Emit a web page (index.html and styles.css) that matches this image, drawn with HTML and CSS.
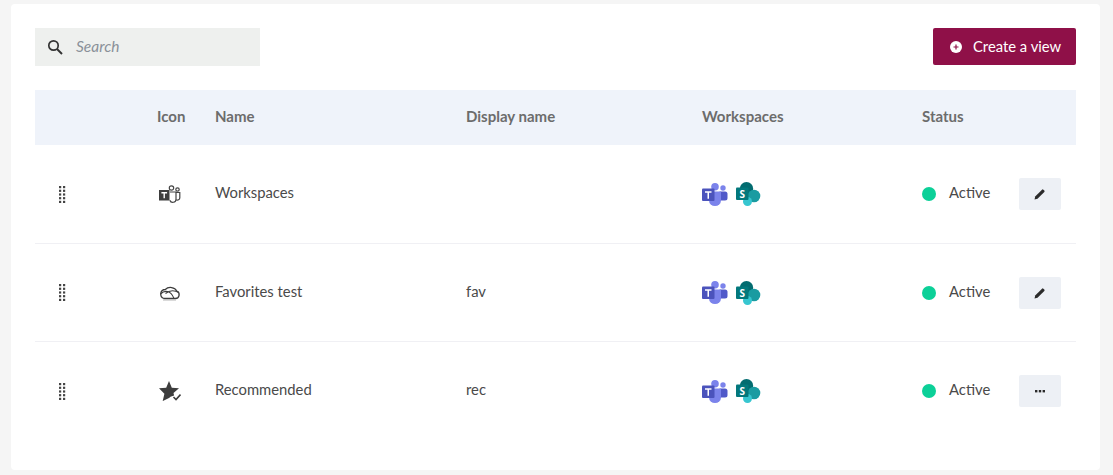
FILE: index.html
```html
<!DOCTYPE html>
<html lang="en">
<head>
<meta charset="utf-8">
<title>Views</title>
<link rel="stylesheet" href="styles.css">
</head>
<body>
<svg class="defs" width="0" height="0" aria-hidden="true">
  <defs>
    <symbol id="handle" viewBox="0 0 7 19">
      <g fill="#444">
        <rect x="0" y="1" width="2.200" height="2.200"/><rect x="4" y="1" width="2.200" height="2.200"/>
        <rect x="0" y="4.700" width="2.200" height="2.200"/><rect x="4" y="4.700" width="2.200" height="2.200"/>
        <rect x="0" y="8.400" width="2.200" height="2.200"/><rect x="4" y="8.400" width="2.200" height="2.200"/>
        <rect x="0" y="12.100" width="2.200" height="2.200"/><rect x="4" y="12.100" width="2.200" height="2.200"/>
        <rect x="0" y="15.800" width="2.200" height="2.200"/><rect x="4" y="15.800" width="2.200" height="2.200"/>
      </g>
    </symbol>
    <symbol id="teams" viewBox="0 0 26 23">
      <circle cx="21" cy="5" r="2.700" fill="#7b83eb"/>
      <rect x="16" y="8.500" width="9.500" height="9" rx="2.500" fill="#5059c9"/>
      <circle cx="13" cy="3.800" r="3.800" fill="#7b83eb"/>
      <path d="M7 8.500h12v9a6 5.500 0 0 1-12 0z" fill="#7b83eb"/>
      <rect x="0" y="5.500" width="12.500" height="12.500" rx="1" fill="#4b53bc"/>
      <path d="M3 8.300h6.500v1.500H7v6H5.500v-6H3z" fill="#fff"/>
    </symbol>
    <symbol id="sharepoint" viewBox="0 0 26 24">
      <circle cx="10.500" cy="6.700" r="6.700" fill="#036c70"/>
      <circle cx="18" cy="14" r="6.300" fill="#1a9ba1"/>
      <circle cx="11.500" cy="19.500" r="4.500" fill="#37c6d0"/>
      <rect x="0" y="5.500" width="12.500" height="12.500" rx="1" fill="#03787c"/>
      <text x="6.200" y="15.800" class="sp-letter">S</text>
    </symbol>
  </defs>
</svg>
<main class="card">
  <div class="toolbar">
    <div class="search">
      <svg class="search-icon" viewBox="0 0 16 16" width="16" height="16"><circle cx="6.500" cy="6.500" r="4.700" fill="none" stroke="#333" stroke-width="1.700"/><path d="M10 10l5 5" stroke="#333" stroke-width="2" fill="none"/></svg>
      <span class="search-text">Search</span>
    </div>
    <button class="create">
      <svg viewBox="0 0 12 12" width="12" height="12"><circle cx="6" cy="6" r="6" fill="#fff"/><path d="M3.500 6h5M6 3.500v5" stroke="#8f1048" stroke-width="1.200"/></svg>
      <span class="label">Create a view</span>
    </button>
  </div>

  <div class="row head">
    <div></div>
    <div>Icon</div>
    <div>Name</div>
    <div>Display name</div>
    <div>Workspaces</div>
    <div>Status</div>
    <div></div>
  </div>

  <div class="row item first">
    <div class="handle"><svg width="7" height="19"><use href="#handle"/></svg></div>
    <div class="glyph">
      <svg viewBox="0 0 22 18" width="22" height="18"><rect x="0" y="5" width="10.500" height="10.500" fill="#3d3d3d"/><path d="M2.400 7.700h5.700M5.200 7.700v5.500" stroke="#fff" stroke-width="1.400"/><circle cx="12.500" cy="3" r="2.200" fill="none" stroke="#444" stroke-width="1.200"/><circle cx="18.500" cy="4.500" r="1.700" fill="none" stroke="#444" stroke-width="1.200"/><path d="M11 7h6v7a3.200 3.200 0 0 1-6.200 1.200M17 7.500h3.800v5a2.500 2.500 0 0 1-3.800 2.300" fill="none" stroke="#444" stroke-width="1.200"/></svg>
    </div>
    <div class="txt">Workspaces</div>
    <div></div>
    <div class="apps">
      <svg width="26" height="23"><use href="#teams"/></svg>
      <svg width="26" height="24"><use href="#sharepoint"/></svg>
    </div>
    <div class="status"><i class="dot"></i><span class="txt">Active</span></div>
    <button class="action">
      <svg viewBox="0 0 12 12" width="12" height="12"><path d="M0.500 11.500l.7-3L8 1.700a1 1 0 0 1 1.400 0l.9.9a1 1 0 0 1 0 1.400L3.500 10.800z" fill="#2b2b2b"/></svg>
    </button>
  </div>

  <div class="row item">
    <div class="handle"><svg width="7" height="19"><use href="#handle"/></svg></div>
    <div class="glyph">
      <svg viewBox="0 0 22 16" width="22" height="16"><path d="M5 13.500h11.500a3.800 3.800 0 0 0 1.300-7.300A6.800 5.800 0 0 0 6.300 4.500 4.600 4.600 0 0 0 5 13.500z" fill="none" stroke="#3d3d3d" stroke-width="1.300"/><path d="M1.500 9c4-4 10-4 13.500 4.500M6.500 8.500c3.500-3 8-3.800 13.500-1" fill="none" stroke="#3d3d3d" stroke-width="1.100"/><path d="M4 15h13" stroke="#b5b5b5" stroke-width="1"/></svg>
    </div>
    <div class="txt">Favorites test</div>
    <div class="txt">fav</div>
    <div class="apps">
      <svg width="26" height="23"><use href="#teams"/></svg>
      <svg width="26" height="24"><use href="#sharepoint"/></svg>
    </div>
    <div class="status"><i class="dot"></i><span class="txt">Active</span></div>
    <button class="action">
      <svg viewBox="0 0 12 12" width="12" height="12"><path d="M0.500 11.500l.7-3L8 1.700a1 1 0 0 1 1.400 0l.9.9a1 1 0 0 1 0 1.400L3.500 10.800z" fill="#2b2b2b"/></svg>
    </button>
  </div>

  <div class="row item last">
    <div class="handle"><svg width="7" height="19"><use href="#handle"/></svg></div>
    <div class="glyph">
      <svg viewBox="0 0 22 20" width="22" height="20"><path d="M10 0l2.800 6.700 7.200.6-5.500 4.700 .6 2.500-3.600 1.300-1.500 1.200-6.300 3.100 1.700-7.300L0 7.300l7.200-.6z" fill="#3d3d3d"/><path d="M14.500 16l2.500 2.500 4.500-5" fill="none" stroke="#3d3d3d" stroke-width="1.600"/></svg>
    </div>
    <div class="txt">Recommended</div>
    <div class="txt">rec</div>
    <div class="apps">
      <svg width="26" height="23"><use href="#teams"/></svg>
      <svg width="26" height="24"><use href="#sharepoint"/></svg>
    </div>
    <div class="status"><i class="dot"></i><span class="txt">Active</span></div>
    <button class="action">
      <svg viewBox="0 0 10 3" width="10" height="3"><g fill="#2b2b2b"><rect x="0" y="0" width="2.400" height="2.400"/><rect x="3.800" y="0" width="2.400" height="2.400"/><rect x="7.600" y="0" width="2.400" height="2.400"/></g></svg>
    </button>
  </div>
</main>
</body>
</html>
```

FILE: styles.css
```css
* { box-sizing: border-box; }

html, body { height: 100%; }

body {
  margin: 0;
  padding: 4px 13px 5px 11px;
  background: #f5f5f5;
  font-family: "Lato", "Noto Sans", sans-serif;
  font-size: 14.800px;
  color: #4a4a4a;
  overflow: hidden;
}

.defs { display: block; height: 0; }

.sp-letter {
  font-family: "Noto Sans", sans-serif;
  font-size: 10px;
  font-weight: 700;
  fill: #fff;
  text-anchor: middle;
}

.card {
  height: 466px;
  padding: 24px 24px 0;
  background: #fff;
  border-radius: 4px;
}

.toolbar {
  display: flex;
  justify-content: space-between;
  align-items: flex-start;
  margin-bottom: 24px;
}

.search {
  display: flex;
  align-items: center;
  gap: 13px;
  width: 225px;
  height: 38px;
  padding-left: 12px;
  background: #eef0ee;
}

.search-text {
  margin-bottom: 2px;
  font-size: 15.500px;
  font-style: italic;
  color: #8a9099;
}

.create {
  display: flex;
  align-items: center;
  gap: 11px;
  width: 143px;
  height: 37px;
  padding: 0 0 0 17px;
  border: 0;
  border-radius: 2px;
  background: #8f1048;
  color: #fff;
  font: inherit;
}

.label { margin-bottom: 2px; }

.row {
  display: grid;
  grid-template-columns: 122px 58px 251px 236px 220px 97px 42px 15px;
  align-items: center;
}

.head {
  height: 55px;
  padding-bottom: 4px;
  background: #eff3fa;
  font-size: 15px;
  font-weight: 700;
  color: #6c6c6c;
}

.item {
  height: 98px;
  border-bottom: 1px solid #f0f0f4;
}

.item.first { height: 99px; }

.item.last { border-bottom: 0; }

.txt { margin-bottom: 4px; }

.handle {
  display: flex;
  padding-left: 24px;
}

.glyph {
  display: flex;
  align-items: center;
  padding-left: 2px;
}

.apps {
  display: flex;
  align-items: center;
  gap: 8px;
}

.status {
  display: flex;
  align-items: center;
  gap: 13px;
}

.dot {
  width: 14px;
  height: 14px;
  border-radius: 50%;
  background: #0cd098;
}

.action {
  display: flex;
  align-items: center;
  justify-content: center;
  width: 42px;
  height: 32px;
  padding: 0;
  border: 0;
  border-radius: 2px;
  background: #edf0f5;
}
```
